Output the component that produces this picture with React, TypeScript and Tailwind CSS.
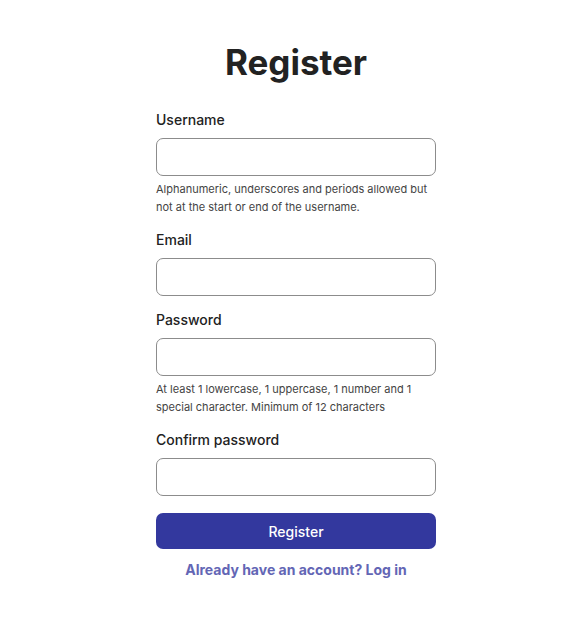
import React from 'react';

interface FieldProps {
    label: string;
    type?: string;
    hint?: string;
}

const Field: React.FC<FieldProps> = ({ label, type = 'text', hint }) => (
    <div className="flex flex-col">
        <label className="text-[14px] leading-[20px] font-medium text-[#222]">{label}</label>
        <input
            type={type}
            className="mt-[8px] h-[38px] w-full rounded-[7px] border border-[#8c8c8c] bg-white px-3 text-[14px] outline-none"
        />
        {hint && <p className="mt-[4px] text-[11px] leading-[18px] text-[#444]">{hint}</p>}
    </div>
);

export default function App() {
    return (
        <div className="min-h-screen bg-white flex justify-center pl-[23px] pt-[42px]" style={{ fontFamily: 'Inter, "Noto Sans", sans-serif' }}>
            <div className="w-[280px] flex flex-col">
                <h1 className="text-center text-[35px] leading-[40px] font-bold text-[#222]">Register</h1>
                <form className="mt-[28px] flex flex-col gap-[14px]" onSubmit={(e) => e.preventDefault()}>
                    <Field label="Username" hint="Alphanumeric, underscores and periods allowed but not at the start or end of the username." />
                    <Field label="Email" type="email" />
                    <Field label="Password" type="password" hint="At least 1 lowercase, 1 uppercase, 1 number and 1 special character. Minimum of 12 characters" />
                    <Field label="Confirm password" type="password" />
                    <button type="submit" className="mt-[3px] h-[36px] w-full rounded-[7px] bg-[#33389e] text-white text-[14px] font-medium">
                        Register
                    </button>
                </form>
                <a href="#" className="mt-[11px] text-center text-[14px] leading-[20px] font-bold text-[#6366b5]">
                    Already have an account? Log in
                </a>
            </div>
        </div>
    );
}
